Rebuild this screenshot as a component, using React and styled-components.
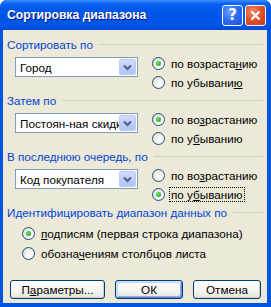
import React from 'react';
import styled, { createGlobalStyle } from 'styled-components';

const GlobalStyle = createGlobalStyle`
  html, body {
    margin: 0;
    padding: 0;
    background: #ffffff;
  }
  * {
    box-sizing: border-box;
  }
`;

const Window = styled.div`
  width: 271px;
  height: 307px;
  display: flex;
  flex-direction: column;
  background: #0054e3;
  border-radius: 7px 7px 0 0;
  overflow: hidden;
  font-family: 'Liberation Sans', Arial, sans-serif;
  font-size: 11.7px;
  color: #000;
`;

const TitleBar = styled.div`
  height: 30px;
  flex: none;
  display: flex;
  align-items: center;
  padding: 0 5px 0 7px;
  background: linear-gradient(
    to bottom,
    #3c8cf8 0%,
    #0a64f0 12%,
    #0058ea 30%,
    #0054e3 60%,
    #0055eb 85%,
    #0148cf 100%
  );
`;

const Title = styled.div`
  flex: 1;
  color: #fff;
  font-weight: bold;
  font-size: 12.2px;
  text-shadow: 1px 1px 0 #0a1883;
`;

const CaptionButton = styled.div`
  width: 21px;
  height: 21px;
  margin-left: 2px;
  border: 1px solid #fff;
  border-radius: 3px;
  display: flex;
  align-items: center;
  justify-content: center;
  color: #fff;
  font-weight: bold;
  font-size: 15px;
  font-family: 'DejaVu Sans', sans-serif;
  background: ${(p) =>
    p.$close
      ? 'radial-gradient(circle at 35% 30%, #f08c6e 0%, #e0532f 45%, #c4381a 100%)'
      : 'radial-gradient(circle at 35% 30%, #6fa0ff 0%, #2f6ef0 45%, #1c50d8 100%)'};
`;

const Body = styled.div`
  flex: 1;
  margin: 0 4px 4px 3px;
  background: #ece9d8;
  padding: 7px 4px 0 4px;
  display: flex;
  flex-direction: column;
`;

const Section = styled.div`
  display: flex;
  flex-direction: column;
  margin-bottom: 1px;
`;

const Heading = styled.div`
  height: 14px;
  display: flex;
  align-items: center;
  color: #0046d5;
  white-space: nowrap;
  &::after {
    content: '';
    flex: 1;
    height: 1px;
    margin-left: 6px;
    background: #d0d0bf;
  }
`;

const SortRow = styled.div`
  display: flex;
  align-items: flex-start;
  margin-top: 3px;
`;

const Combo = styled.div`
  width: 123px;
  height: 20px;
  margin: 3px 0 0 8px;
  border: 1px solid #7f9db9;
  background: #fff;
  display: flex;
  align-items: center;
  padding: 1px 1px 1px 4px;
`;

const ComboText = styled.div`
  flex: 1;
  overflow: hidden;
  white-space: nowrap;
`;

const DropButton = styled.div`
  width: 17px;
  height: 16px;
  flex: none;
  border: 1px solid #bccbf4;
  border-radius: 2px;
  background: linear-gradient(to bottom, #d2defb 0%, #bccefa 50%, #b0c5f7 100%);
  display: flex;
  align-items: center;
  justify-content: center;
`;

const RadioColumn = styled.div`
  display: flex;
  flex-direction: column;
  margin-left: ${(p) => p.$indent}px;
  margin-top: ${(p) => p.$top || 0}px;
`;

const RadioRow = styled.div`
  height: ${(p) => p.$h || 19}px;
  display: flex;
  align-items: center;
  white-space: nowrap;
`;

const RadioCircle = styled.span`
  width: 13px;
  height: 13px;
  flex: none;
  border-radius: 50%;
  border: 1px solid #1c5180;
  background: radial-gradient(circle at 70% 70%, #ffffff 0%, #f4f3ee 40%, #d6d3c6 100%);
  display: flex;
  align-items: center;
  justify-content: center;
  margin-right: 4px;
  &::after {
    content: '';
    display: ${(p) => (p.$checked ? 'block' : 'none')};
    width: 5px;
    height: 5px;
    border-radius: 50%;
    background: radial-gradient(circle at 40% 40%, #6ee66e 0%, #21a121 80%);
  }
`;

const RadioLabel = styled.span`
  padding: 0 1px;
  border: 1px dotted ${(p) => (p.$focus ? '#000' : 'transparent')};
  line-height: 13px;
`;

const ButtonRow = styled.div`
  display: flex;
  gap: 10px;
  margin: 16px 0 0 3px;
`;

const Button = styled.div`
  width: ${(p) => p.$w}px;
  height: 19px;
  border: 1px solid #003c74;
  border-radius: 3px;
  display: flex;
  align-items: center;
  justify-content: center;
  background: linear-gradient(to bottom, #ffffff 0%, #f5f4ef 60%, #e3e2da 100%);
  box-shadow: ${(p) =>
    p.$default
      ? 'inset 1px 1px 0 #cee7ff, inset -1px -1px 0 #6982ee, inset 2px 2px 0 #bcd4f6, inset -2px -2px 0 #89ade4'
      : 'inset -1px -1px 0 #d6d0c5'};
`;

const Chevron = () => (
  <svg width="9" height="7" viewBox="0 0 9 7">
    <path d="M1 1.5 L4.5 5 L8 1.5" fill="none" stroke="#4d6185" strokeWidth="2" />
  </svg>
);

const Radio = ({ checked, focus, h, children }) => (
  <RadioRow $h={h}>
    <RadioCircle $checked={checked} />
    <RadioLabel $focus={focus}>{children}</RadioLabel>
  </RadioRow>
);

const SortSection = ({ title, value, up, down, desc, focus }) => (
  <Section>
    <Heading>{title}</Heading>
    <SortRow>
      <Combo>
        <ComboText>{value}</ComboText>
        <DropButton>
          <Chevron />
        </DropButton>
      </Combo>
      <RadioColumn $indent={14}>
        <Radio checked={!desc}>{up}</Radio>
        <Radio checked={desc} focus={focus}>
          {down}
        </Radio>
      </RadioColumn>
    </SortRow>
  </Section>
);

export default function App() {
  return (
    <>
      <GlobalStyle />
      <Window>
        <TitleBar>
          <Title>Сортировка диапазона</Title>
          <CaptionButton>?</CaptionButton>
          <CaptionButton $close>
            <svg width="11" height="11" viewBox="0 0 11 11">
              <path d="M1.5 1.5 L9.5 9.5 M9.5 1.5 L1.5 9.5" stroke="#fff" strokeWidth="2.2" />
            </svg>
          </CaptionButton>
        </TitleBar>
        <Body>
          <SortSection
            title="Сортировать по"
            value="Город"
            up={<>по возраста<u>н</u>ию</>}
            down={<>по убывани<u>ю</u></>}
          />
          <SortSection
            title="Затем по"
            value="Постоян-ная скидка"
            up={<>по во<u>з</u>растанию</>}
            down={<>по у<u>б</u>ыванию</>}
          />
          <SortSection
            title="В последнюю очередь, по"
            value="Код покупателя"
            up={<>по во<u>з</u>растанию</>}
            down={<>по у<u>б</u>ыванию</>}
            desc
            focus
          />
          <Section>
            <Heading>Идентифицировать диапазон данных по</Heading>
            <RadioColumn $indent={15} $top={4}>
              <Radio checked h={20}>
                <u>п</u>одписям (первая строка диапазона)
              </Radio>
              <Radio h={20}>
                обозна<u>ч</u>ениям столбцов листа
              </Radio>
            </RadioColumn>
          </Section>
          <ButtonRow>
            <Button $w={95}>
              <span>
                П<u>а</u>раметры...
              </span>
            </Button>
            <Button $w={68} $default>
              ОК
            </Button>
            <Button $w={68}>Отмена</Button>
          </ButtonRow>
        </Body>
      </Window>
    </>
  );
}
